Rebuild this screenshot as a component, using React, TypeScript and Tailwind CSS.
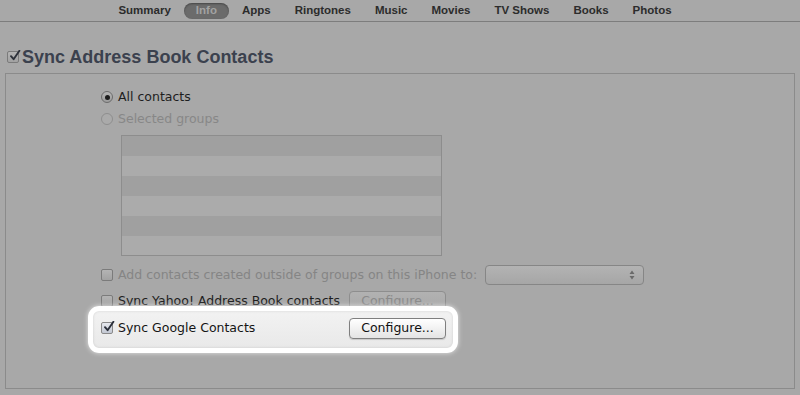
import React from 'react';

const tabs = ['Summary', 'Info', 'Apps', 'Ringtones', 'Music', 'Movies', 'TV Shows', 'Books', 'Photos'];

// Small check mark drawn inside the checkbox square
const CheckMark = ({ color }: { color: string }) => (
  <svg viewBox="0 0 12 12" className="absolute -top-[2px] left-[1px] w-[12px] h-[12px]">
    <path d="M2 6.2 L4.6 9.2 L10.4 0.8" fill="none" stroke={color} strokeWidth={1.9} strokeLinecap="round" strokeLinejoin="round" />
  </svg>
);

const Checkbox = ({ checked, bright }: { checked?: boolean; bright?: boolean }) => (
  <span
    className={`relative inline-block w-[12px] h-[12px] shrink-0 rounded-[2px] border ${
      bright
        ? 'border-[#8a8a8a] bg-gradient-to-b from-[#e6e8ee] to-[#c3c8d3]'
        : 'border-[#7b7b7b] bg-gradient-to-b from-[#b4b4b4] to-[#a2a2a2]'
    }`}
  >
    {checked && <CheckMark color={bright ? '#2a2f3a' : '#2d313a'} />}
  </span>
);

const Radio = ({ selected, disabled }: { selected?: boolean; disabled?: boolean }) => (
  <span
    className={`relative flex items-center justify-center w-[12px] h-[12px] shrink-0 rounded-full border ${
      disabled ? 'border-[#8e8e8e] bg-[#aaaaaa]' : 'border-[#6c6c6c] bg-gradient-to-b from-[#b6b6b6] to-[#9c9c9c]'
    }`}
  >
    {selected && <span className="w-[5px] h-[5px] rounded-full bg-[#1c1c1c]" />}
  </span>
);

const ConfigureButton = ({ enabled }: { enabled?: boolean }) => (
  <button
    className={`w-[97px] h-[21px] rounded-[4px] border text-[12.5px] leading-none ${
      enabled
        ? 'border-[#7f7f7f] bg-gradient-to-b from-[#ffffff] to-[#e4e4e4] text-[#111] shadow-[0_1px_1px_rgba(0,0,0,0.15)]'
        : 'border-[#8e8e8e] bg-gradient-to-b from-[#b2b2b2] to-[#a8a8a8] text-[#8a8a8a]'
    }`}
  >
    Configure...
  </button>
);

const App: React.FC = () => {
  return (
    <div className="w-[800px] h-[395px] overflow-hidden bg-[#a8a8a8] font-['DejaVu_Sans',sans-serif] text-[12.5px]">
      {/* tab bar */}
      <div className="h-[22px] border-b border-[#7d7d7d] flex items-center justify-center pr-[10px] font-['Liberation_Sans',Arial,sans-serif] font-bold text-[11.5px] text-[#2c2c2c]">
        {tabs.map((t) =>
          t === 'Info' ? (
            <span key={t} className="h-[16px] px-[12px] mx-[1px] rounded-full bg-[#6b6b6b] text-[#a2a2a2] flex items-center shadow-[inset_0_1px_2px_rgba(0,0,0,0.35)]">
              {t}
            </span>
          ) : (
            <span key={t} className="px-[12px]">{t}</span>
          )
        )}
      </div>

      {/* section title */}
      <div className="h-[24px] mt-[23px] pl-[7px] flex items-center gap-[3px]">
        <Checkbox checked />
        <span className="font-['Liberation_Sans',Arial,sans-serif] font-bold text-[18px] text-[#3b414e]">
          Sync Address Book Contacts
        </span>
      </div>

      {/* group box */}
      <div className="mt-[4px] ml-[5px] w-[790px] h-[316px] border border-[#8b8b8b] pl-[95px] pt-[12px] text-[#1e1e1e]">
        <div className="h-[22px] flex items-center gap-[5px]">
          <Radio selected />
          <span>All contacts</span>
        </div>
        <div className="h-[22px] flex items-center gap-[5px] text-[#878787]">
          <Radio disabled />
          <span>Selected groups</span>
        </div>

        <div className="mt-[5px] ml-[20px] w-[321px] h-[121px] border border-[#8d8d8d] flex flex-col">
          <div className="h-[20px] bg-[#a0a0a0]" />
          <div className="h-[20px] bg-[#ababab]" />
          <div className="h-[20px] bg-[#a0a0a0]" />
          <div className="h-[20px] bg-[#ababab]" />
          <div className="h-[20px] bg-[#a0a0a0]" />
          <div className="h-[19px] bg-[#ababab]" />
        </div>

        <div className="mt-[8px] h-[22px] flex items-center text-[#858585]">
          <Checkbox />
          <span className="ml-[5px] w-[367px] whitespace-nowrap">Add contacts created outside of groups on this iPhone to:</span>
          <div className="w-[159px] h-[20px] rounded-[4px] border border-[#868686] bg-gradient-to-b from-[#b3b3b3] to-[#a6a6a6] flex items-center justify-end pr-[8px]">
            <svg viewBox="0 0 6 10" className="w-[6px] h-[10px]">
              <path d="M3 0.5 L5.5 4 L0.5 4 Z M3 9.5 L5.5 6 L0.5 6 Z" fill="#6a6a6a" />
            </svg>
          </div>
        </div>

        <div className="mt-[4px] h-[22px] flex items-center">
          <Checkbox />
          <span className="ml-[5px] w-[231px] whitespace-nowrap">Sync Yahoo! Address Book contacts</span>
          <ConfigureButton />
        </div>

        {/* highlighted row */}
        <div className="relative mt-[5px] h-[22px] w-[345px]">
          <div className="absolute -left-[13px] -top-[11px] w-[370px] h-[47px] rounded-[11px] border-[5px] border-white bg-gradient-to-b from-[#f2f2f2] to-[#e9e9e9] shadow-[0_0_5px_rgba(255,255,255,0.7),inset_0_0_3px_rgba(0,0,0,0.12)]" />
          <div className="relative flex items-center h-[22px] text-[#141414]">
            <Checkbox checked bright />
            <span className="ml-[5px] w-[231px]">Sync Google Contacts</span>
            <ConfigureButton enabled />
          </div>
        </div>
      </div>
    </div>
  );
};

export default App;
